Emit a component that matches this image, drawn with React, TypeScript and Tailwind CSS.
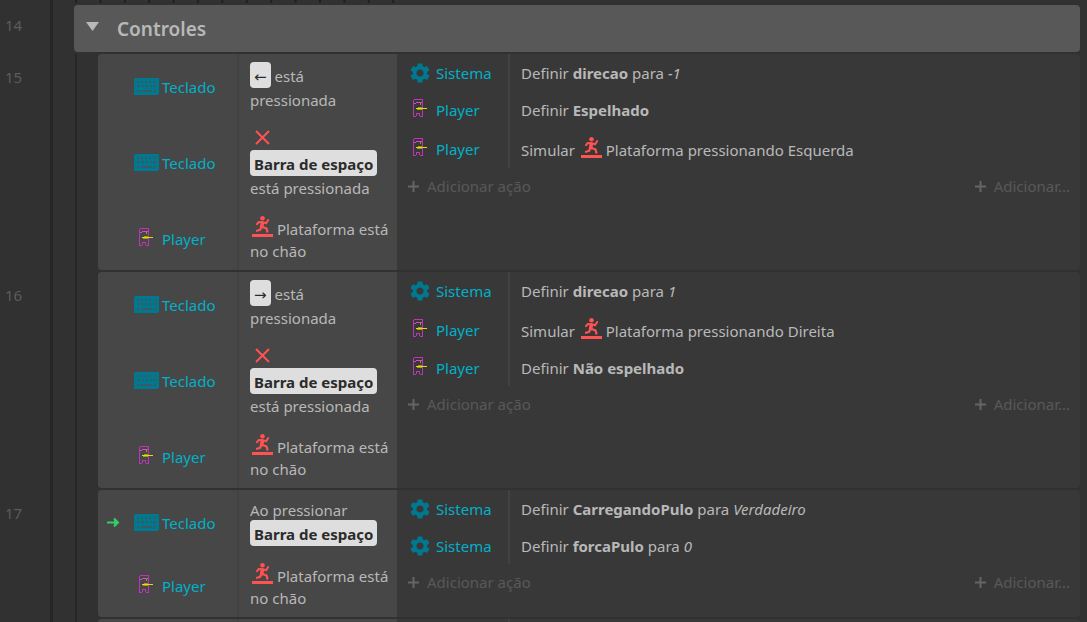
import type { ReactNode } from "react";
import { MdSettings } from "react-icons/md";

const KEY_HOLES = [
  [3, 3], [7, 3], [11, 3], [15, 3], [20, 3],
  [8, 7], [12, 7], [16, 7],
  [3, 12], [20, 12],
];

function KeyboardIcon() {
  return (
    <svg width="25" height="17" viewBox="0 0 25 17" shapeRendering="crispEdges" className="shrink-0" aria-hidden="true">
      <rect width="25" height="17" rx="2" fill="#00788f" />
      {KEY_HOLES.map(([x, y]) => (
        <rect key={`${x}-${y}`} x={x} y={y} width="2" height="2" fill="#3a5960" />
      ))}
      <rect x="7" y="12" width="11" height="2" fill="#3a5960" />
      <rect x="3" y="7" width="3" height="2" fill="#3a5960" />
      <rect x="19" y="7" width="3" height="2" fill="#3a5960" />
    </svg>
  );
}

function PlayerIcon() {
  return (
    <svg width="14" height="18" viewBox="0 0 14 18" shapeRendering="crispEdges" className="mb-1 shrink-0" aria-hidden="true">
      <g fill="#bb35b7">
        <rect x="1" y="0" width="9" height="1" />
        <rect x="0" y="1" width="1" height="16" />
        <rect x="9" y="1" width="1" height="16" />
        <rect x="0" y="17" width="3" height="1" />
        <rect x="7" y="17" width="3" height="1" />
        <rect x="3" y="14" width="1" height="3" />
        <rect x="6" y="14" width="1" height="3" />
        <rect x="4" y="14" width="2" height="1" />
      </g>
      <g fill="#e53fe0">
        <rect x="3" y="3" width="6" height="1" />
        <rect x="1" y="4" width="2" height="1" />
      </g>
      <g fill="#a39b18">
        <rect x="7" y="4" width="1" height="2" />
        <rect x="5" y="8" width="4" height="1" />
        <rect x="4" y="10" width="5" height="1" />
      </g>
      <rect x="3" y="9" width="11" height="1" fill="#e5dc0c" />
    </svg>
  );
}

function PlatformIcon() {
  return (
    <svg width="21" height="21" viewBox="0 0 21 21" className="ml-[2px] inline-block align-[-2px]" aria-hidden="true">
      <rect y="18" width="21" height="3" fill="#ff5252" />
      <circle cx="10.5" cy="2.3" r="2.3" fill="#ff5252" />
      <g fill="none" stroke="#ff5252" strokeLinecap="round" strokeLinejoin="round">
        <path d="M5 8.2 L6.8 6 L11.2 6.2 L14 7.4 L16.2 4" strokeWidth="2" />
        <path d="M10.4 7.2 L9.6 10.8" strokeWidth="3.6" />
        <path d="M9 11.4 L8.2 13.8 L5 14.8" strokeWidth="2.2" />
        <path d="M10.5 11 L14.6 12.6 L15.4 15.6" strokeWidth="2.2" />
      </g>
    </svg>
  );
}

function Subject({ name }: { name: string }) {
  return (
    <>
      <span className="flex w-6 shrink-0 items-center justify-center">
        {name === "Teclado" && <KeyboardIcon />}
        {name === "Player" && <PlayerIcon />}
        {name === "Sistema" && <MdSettings size={24} className="shrink-0 text-[#00788f]" />}
      </span>
      <span className="text-[#00b0c8]">{name}</span>
    </>
  );
}

function Key({ children }: { children: ReactNode }) {
  return (
    <kbd className="inline-block h-[26px] rounded-sm bg-[#dedede] px-1 font-['Noto_Sans',sans-serif] leading-7 font-bold text-[#2b2b2b]">
      {children}
    </kbd>
  );
}

type Row = { who: string; text: ReactNode; trigger?: boolean; tall?: boolean };

function Condition({ who, text, trigger }: Row) {
  return (
    <div className="flex flex-1">
      <div className="flex w-[141px] shrink-0 items-center border-r-2 border-[#424242] pt-[2px] pl-2">
        <span className="flex w-7 shrink-0">
          {trigger && (
            <svg width="14" height="11" viewBox="0 0 14 11" role="img" aria-label="Gatilho">
              <path d="M1 5.5H12M8 1.5L12 5.5L8 9.5" fill="none" stroke="#33cc66" strokeWidth="2" />
              <path d="M8 1.5L13 5.5L8 9.5Z" fill="#33cc66" />
            </svg>
          )}
        </span>
        <span className="flex items-center gap-1">
          <Subject name={who} />
        </span>
      </div>
      <div className="flex flex-1 flex-col justify-center pl-[11px]">{text}</div>
    </div>
  );
}

function Action({ who, text, tall }: Row) {
  return (
    <div className={tall ? "flex h-10" : "flex h-[37px]"}>
      <div className="flex w-[113px] shrink-0 items-center gap-1 border-r-2 border-[#424242] pt-px pl-[11px]">
        <Subject name={who} />
      </div>
      <div className="flex items-center pt-px pl-[11px]">
        <p>{text}</p>
      </div>
    </div>
  );
}

function AddButton({ children }: { children: ReactNode }) {
  return (
    <button type="button" className="flex items-center gap-2 text-[#585858]">
      <svg width="11" height="11" viewBox="0 0 11 11" aria-hidden="true">
        <path d="M5.5 0V11M0 5.5H11" stroke="#656565" strokeWidth="2" />
      </svg>
      {children}
    </button>
  );
}

function arrowHeld(arrow: string) {
  return (
    <p className="pt-[2px] leading-6">
      <Key>
        <span className="inline-block font-['DejaVu_Sans',sans-serif] leading-6 font-normal">{arrow}</span>
      </Key>{" "}
      está<br />pressionada
    </p>
  );
}

const spaceNotHeld = (
  <div className="pt-[5px]">
    <svg width="25" height="18" viewBox="0 0 25 18" role="img" aria-label="Não">
      <path d="M6 3L19 16M19 3L6 16" stroke="#ff5252" strokeWidth="2" />
    </svg>
    <div className="flex pt-1"><Key>Barra de espaço</Key></div>
    <p className="leading-6">está pressionada</p>
  </div>
);

const onFloor = (
  <p className="pt-px leading-[22px]">
    <PlatformIcon /> Plataforma está<br />no chão
  </p>
);

type EventBlock = { id: number; conditions: (Row & { size: string })[]; actions: Row[] };

const SHORT = "flex h-[63px]";
const MEDIUM = "flex h-16";
const LONG = "flex h-[89px]";

const EVENTS: EventBlock[] = [
  {
    id: 15,
    conditions: [
      { who: "Teclado", text: arrowHeld("←"), size: SHORT },
      { who: "Teclado", text: spaceNotHeld, size: LONG },
      { who: "Player", text: onFloor, size: MEDIUM },
    ],
    actions: [
      { who: "Sistema", text: <>Definir <b>direcao</b> para <i>-1</i></> },
      { who: "Player", text: <>Definir <b>Espelhado</b></> },
      { who: "Player", text: <>Simular <PlatformIcon /> Plataforma pressionando Esquerda</>, tall: true },
    ],
  },
  {
    id: 16,
    conditions: [
      { who: "Teclado", text: arrowHeld("→"), size: SHORT },
      { who: "Teclado", text: spaceNotHeld, size: LONG },
      { who: "Player", text: onFloor, size: MEDIUM },
    ],
    actions: [
      { who: "Sistema", text: <>Definir <b>direcao</b> para <i>1</i></> },
      { who: "Player", text: <>Simular <PlatformIcon /> Plataforma pressionando Direita</>, tall: true },
      { who: "Player", text: <>Definir <b>Não espelhado</b></> },
    ],
  },
  {
    id: 17,
    conditions: [
      {
        who: "Teclado",
        trigger: true,
        text: (
          <div className="pt-[2px]">
            <p>Ao pressionar</p>
            <div className="flex"><Key>Barra de espaço</Key></div>
          </div>
        ),
        size: SHORT,
      },
      { who: "Player", text: onFloor, size: MEDIUM },
    ],
    actions: [
      { who: "Sistema", text: <>Definir <b>CarregandoPulo</b> para <i>Verdadeiro</i></> },
      { who: "Sistema", text: <>Definir <b>forcaPulo</b> para <i>0</i></> },
    ],
  },
];

function LineNumber({ children }: { children: ReactNode }) {
  return <div className="w-[50px] shrink-0 pl-[5px] text-[#5c5c5c]">{children}</div>;
}

export default function App() {
  return (
    <main className="h-screen overflow-hidden bg-[#313131] font-['Noto_Sans',sans-serif] text-[15px] leading-5 text-[#b8b8b8]">
      <div className="flex h-[5px]">
        <div className="w-[50px] shrink-0" />
        <div className="w-[3px] shrink-0 bg-[#262626]" />
        <svg width="340" height="3" className="ml-[22px]" aria-hidden="true">
          <path d="M0 1.5H340" stroke="#202020" strokeWidth="3" strokeDasharray="2 22.4" />
        </svg>
      </div>
      <div className="flex">
        <LineNumber><div className="pt-[10px]">14</div></LineNumber>
        <div className="w-[3px] shrink-0 bg-[#262626]" />
        <div className="mr-[7px] ml-[21px] flex-1 pb-[2px]">
          <button type="button" className="flex h-[47px] w-full items-center rounded-sm bg-[#585858] pl-3">
            <svg width="13" height="9" viewBox="0 0 13 9" className="mb-1" aria-hidden="true">
              <path d="M0 0H13L6.5 9Z" fill="#b8b8b8" />
            </svg>
            <h2 className="pl-[18px] text-[19px] leading-6 font-semibold">Controles</h2>
          </button>
        </div>
      </div>
      {EVENTS.map((event) => (
        <div key={event.id} className="flex">
          <LineNumber><div className="pt-[13px]">{event.id}</div></LineNumber>
          <div className="w-[3px] shrink-0 bg-[#262626]" />
          <div className="ml-[22px] w-[2px] shrink-0 bg-[#262626]" />
          <div className="mr-[7px] ml-[21px] flex-1 pb-[2px]">
            <section className="flex overflow-hidden rounded-sm bg-[#383838]">
              <div className="w-[299px] shrink-0 bg-[#474747]">
                {event.conditions.map(({ size, ...row }, i) => (
                  <div key={i} className={size}><Condition {...row} /></div>
                ))}
              </div>
              <div className="flex-1">
                {event.actions.map((row, i) => <Action key={i} {...row} />)}
                <div className="flex justify-between pt-2 pr-[10px] pl-[11px]">
                  <AddButton>Adicionar ação</AddButton>
                  <AddButton>Adicionar...</AddButton>
                </div>
              </div>
            </section>
          </div>
        </div>
      ))}
      <div className="flex h-4">
        <div className="w-[50px] shrink-0" />
        <div className="w-[3px] shrink-0 bg-[#262626]" />
        <div className="ml-[22px] w-[2px] shrink-0 bg-[#262626]" />
        <div className="mr-[7px] ml-[21px] flex flex-1 overflow-hidden rounded-t-sm bg-[#383838]">
          <div className="w-[141px] border-r-2 border-[#424242] bg-[#474747]" />
          <div className="w-[158px] bg-[#474747]" />
          <div className="w-[113px] border-r-2 border-[#424242]" />
        </div>
      </div>
    </main>
  );
}
